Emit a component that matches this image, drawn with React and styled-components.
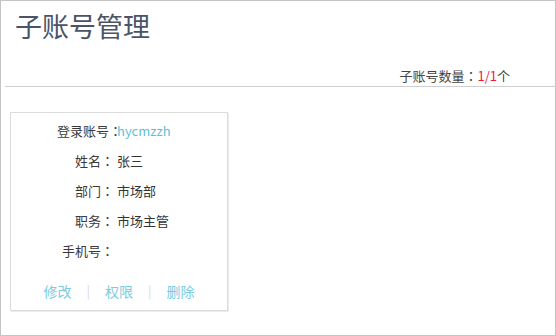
import React from "react";
import styled, { createGlobalStyle } from "styled-components";

const GlobalStyle = createGlobalStyle`
  html, body {
    margin: 0;
    padding: 0;
    background: #fff;
  }
  body {
    font-family: "Noto Sans CJK SC", "Noto Sans", sans-serif;
  }
`;

const Frame = styled.div`
  box-sizing: border-box;
  width: 556px;
  height: 336px;
  border: 1px solid #c4c4c4;
  background: #fff;
  overflow: hidden;
`;

const Header = styled.div`
  margin-left: 4px;
  padding-top: 5px;
  border-bottom: 1px solid #cfcfcf;
`;

const Title = styled.h1`
  margin: 0;
  padding-left: 10px;
  font-size: 27px;
  font-weight: 400;
  line-height: 40px;
  color: #4a5466;
`;

const CountRow = styled.div`
  margin-top: 20px;
  padding-right: 45px;
  text-align: right;
  font-size: 13px;
  line-height: 20px;
  color: #444;
`;

const Red = styled.span`
  color: #f0183c;
`;

/* centred full-width colon, as in the reference */
const Colon = styled.span`
  font-family: "Noto Sans CJK TC", sans-serif;
`;

const Card = styled.div`
  box-sizing: border-box;
  width: 218px;
  margin: 25px 0 0 9px;
  padding: 3px 0 4px;
  border: 1px solid #dcdcdc;
  box-shadow: 1px 1px 0 #ececec;
`;

const Row = styled.div`
  display: flex;
  font-size: 13px;
  line-height: 30px;
  color: #333;
`;

const Label = styled.span`
  flex: none;
  width: 57px;
  margin-left: 46px;
  text-align: right;
  white-space: nowrap;
  color: #3a3a3a;
`;

const Value = styled.span`
  margin-left: 3px;
  color: ${(p) => (p.$link ? "#5bbfd8" : "#333")};
  position: relative;
`;

const Actions = styled.div`
  display: flex;
  justify-content: center;
  align-items: center;
  gap: 15px;
  margin-top: 10px;
  font-size: 14px;
  line-height: 30px;
`;

const Action = styled.a`
  color: #7ccbe0;
  text-decoration: none;
  cursor: pointer;
`;

const Sep = styled.span`
  color: #d8d8d8;
  font-size: 13px;
`;

const rows = [
  { label: "登录账号", value: "hycmzzh", link: true },
  { label: "姓名", value: "张三" },
  { label: "部门", value: "市场部" },
  { label: "职务", value: "市场主管" },
  { label: "手机号", value: "" },
];

const App = () => (
  <>
    <GlobalStyle />
    <Frame>
      <Header>
        <Title>子账号管理</Title>
        <CountRow>
          子账号数量<Colon>：</Colon>
          <Red>1/1</Red>个
        </CountRow>
      </Header>
      <Card>
        {rows.map((r) => (
          <Row key={r.label}>
            <Label>
              {r.label}
              <Colon>：</Colon>
            </Label>
            <Value $link={r.link}>{r.value}</Value>
          </Row>
        ))}
        <Actions>
          <Action>修改</Action>
          <Sep>|</Sep>
          <Action>权限</Action>
          <Sep>|</Sep>
          <Action>删除</Action>
        </Actions>
      </Card>
    </Frame>
  </>
);

export default App;
